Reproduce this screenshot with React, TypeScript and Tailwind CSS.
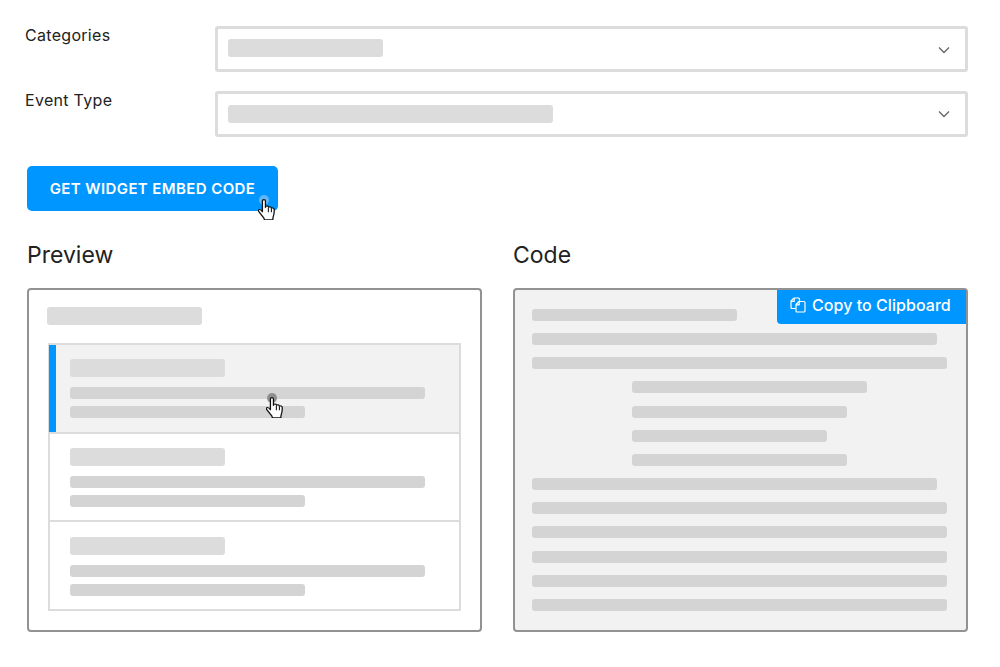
const font = { fontFamily: '"Inter", "Liberation Sans", sans-serif' };

function Hand({ className }: { className: string }) {
  return (
    <svg className={className} viewBox="0.8 0.5 14.6 20.8" preserveAspectRatio="none" aria-hidden="true">
      <path
        d="M4.6 13.2V2.4a1.3 1.3 0 0 1 2.6 0v6.4l.3-.9c.5-.7 1.9-.6 2.2.3l.2.6c.4-.8 1.9-.8 2.2.2l.2.7c.5-.6 2.2-.5 2.400.9.2 2.600 0 5-.9 7.600l-.3 2.900H6.300l-.4-1.600L1.500 13c-.7-.9-.4-1.900.4-2.100.8-.2 1.500.3 2.700 2.300z"
        fill="#fff"
        stroke="#111"
        strokeWidth="1.100"
        strokeLinejoin="round"
      />
      <path d="M9.700 9.500v4M12.300 10v3.500" fill="none" stroke="#111" strokeWidth="0.900" />
    </svg>
  );
}

function Select({ width, first }: { width: string; first?: boolean }) {
  return (
    <div className="flex h-[46px] flex-1 items-center justify-between rounded-[3px] border-[3px] border-[#dcdcdc] bg-white pl-[10px] pr-[15px]">
      <div className={`h-[18px] rounded-[3px] bg-[#dcdcdc] ${width} ${first ? "mb-[2px]" : ""}`} />
      <svg className={first ? "mt-[1px]" : "mb-[1px]"} width="12" height="8" viewBox="0 0 12 8" aria-hidden="true">
        <path d="M1 1.500l5 5 5-5" fill="none" stroke="#666" strokeWidth="1.300" />
      </svg>
    </div>
  );
}

function Item({ box, active, cursor }: { box: string; active?: boolean; cursor?: boolean }) {
  return (
    <div className={`relative flex flex-col border-[#dcdcdc] pl-[20px] ${box} ${active ? "bg-[#f2f2f2]" : "bg-white"}`}>
      {active && <div className="absolute -left-[1px] bottom-0 top-0 w-[7px] bg-[#0096ff]" />}
      <div className="h-[18px] w-[155px] rounded-[3px] bg-[#dcdcdc]" />
      <div className="mt-[10px] h-[12px] w-[355px] rounded-[3px] bg-[#d4d4d4]" />
      <div className="mt-[7px] h-[12px] w-[235px] rounded-[3px] bg-[#d4d4d4]" />
      {cursor && (
        <>
          <div className="absolute left-[217px] top-[48px] h-[10px] w-[10px] rounded-full bg-[#8f8f8f]" />
          <Hand className="absolute left-[216px] top-[52px] h-[21px] w-[17px]" />
        </>
      )}
    </div>
  );
}

const codeLines = [
  "w-[205px]",
  "w-[405px]",
  "w-[415px]",
  "ml-[100px] w-[235px]",
  "ml-[100px] w-[215px]",
  "ml-[100px] w-[195px]",
  "ml-[100px] w-[215px]",
  "w-[405px]",
  "w-[415px]",
  "w-[415px]",
  "w-[415px]",
  "w-[415px]",
  "w-[415px]",
];

export default function App() {
  return (
    <div className="h-[667px] w-[1000px] overflow-hidden bg-white pl-[25px] pt-[26px] text-[#222]" style={font}>
      <div className="flex w-[943px]">
        <div className="w-[190px] text-[16px] leading-[18px] tracking-[0.3px]">Categories</div>
        <Select width="w-[155px]" first />
      </div>
      <div className="mt-[19px] flex w-[943px]">
        <div className="w-[190px] text-[16px] leading-[18px] tracking-[0.3px]">Event Type</div>
        <Select width="w-[325px]" />
      </div>
      <div className="relative ml-[2px] mt-[29px] flex h-[45px] w-[251px] items-center justify-center rounded-[5px] bg-[#0096ff] pt-[1px] text-[15px] font-semibold tracking-[0.4px] text-white">
        GET WIDGET EMBED CODE
        <div className="absolute left-[232px] top-[29px] h-[10px] w-[10px] rounded-full bg-[#5fb8f5]" />
        <Hand className="absolute left-[231px] top-[33px] h-[21px] w-[17px]" />
      </div>
      <div className="ml-[2px] mt-[31px] grid w-[941px] grid-cols-2 gap-x-[31px]">
        <h2 className="text-[23px] leading-[27px]">Preview</h2>
        <h2 className="text-[23px] leading-[27px]">Code</h2>
        <div className="mt-[19px] h-[344px] rounded-[4px] border-2 border-[#929292] bg-white pl-[18px] pt-[17px]">
          <div className="h-[18px] w-[155px] rounded-[3px] bg-[#dcdcdc]" />
          <div className="ml-[1px] mt-[18px] w-[413px] border-2 border-[#dcdcdc]">
            <Item box="h-[89px] border-b-2 pt-[14px]" active cursor />
            <Item box="h-[88px] border-b-2 pt-[14px]" />
            <Item box="h-[87px] pt-[15px]" />
          </div>
        </div>
        <div className="relative mt-[19px] flex h-[344px] flex-col gap-[12.17px] rounded-[4px] border-2 border-[#929292] bg-[#f2f2f2] pl-[17px] pt-[19px]">
          {codeLines.map((c, i) => (
            <div key={i} className={`h-[12px] rounded-[3px] bg-[#d4d4d4] ${c}`} />
          ))}
          <div className="absolute right-0 top-0 flex h-[34px] w-[189px] items-center gap-[6px] rounded-bl-[4px] bg-[#0096ff] pb-[4px] pl-[13px] text-[16px] font-medium tracking-[0.05px] text-white">
            <svg width="16" height="16" viewBox="0 0 16 16" fill="none" stroke="#fff" strokeWidth="1.200" strokeLinejoin="round" aria-hidden="true">
              <path d="M5.500 11.500H2a1 1 0 0 1-1-1V4l3-3h4.500a1 1 0 0 1 1 1v2.500" />
              <path d="M1 4.300h3.200V1" />
              <path d="M9 4.500h5a1 1 0 0 1 1 1V14a1 1 0 0 1-1 1H7a1 1 0 0 1-1-1V7.500z" />
              <path d="M6 7.800h3.200V4.500" />
            </svg>
            Copy to Clipboard
          </div>
        </div>
      </div>
    </div>
  );
}
